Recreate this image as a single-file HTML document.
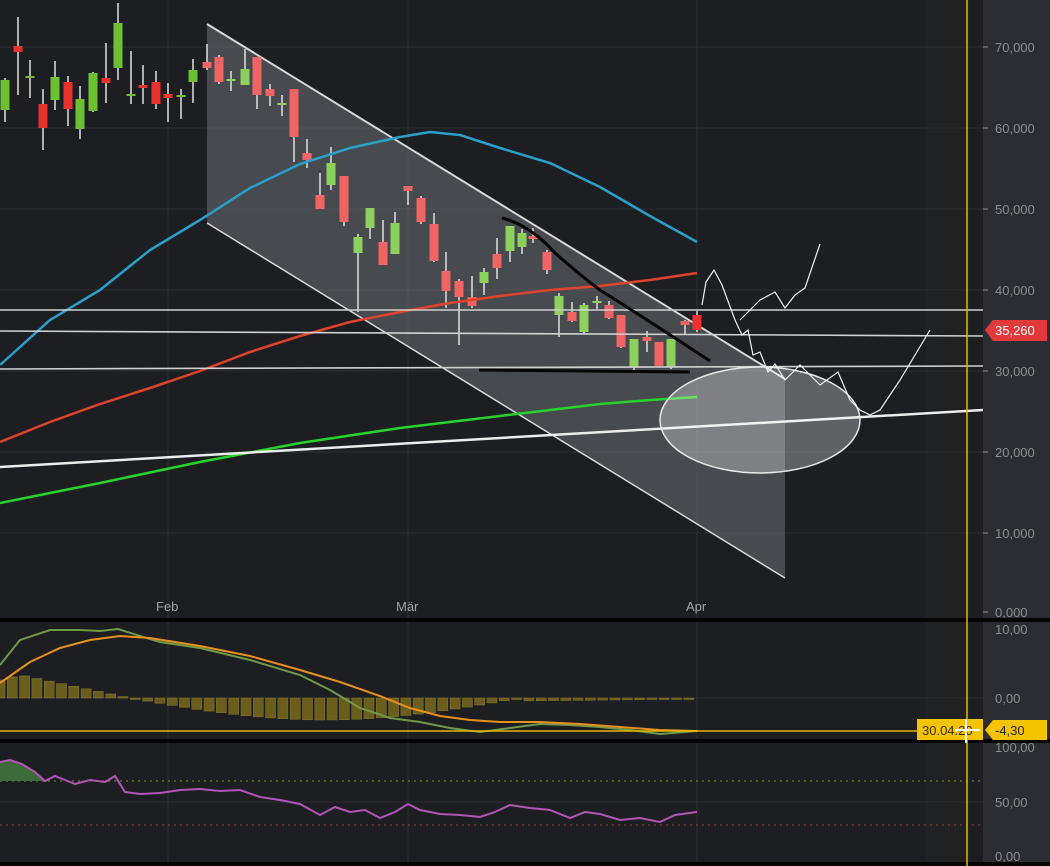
<!DOCTYPE html>
<html><head><meta charset="utf-8"><style>
html,body{margin:0;padding:0;background:#1c1e22;width:1050px;height:866px;overflow:hidden}
svg{display:block;font-family:"Liberation Sans",sans-serif}
</style></head><body>
<svg id="s" width="1050" height="866" viewBox="0 0 1050 866" xmlns="http://www.w3.org/2000/svg">
<rect width="1050" height="866" fill="#1c1e22"/>
<rect x="983" y="0" width="67" height="866" fill="#2b2d32"/>
<g stroke="#2c2e33" stroke-width="1">
<line x1="0" y1="47" x2="983" y2="47"/><line x1="0" y1="128" x2="983" y2="128"/><line x1="0" y1="209" x2="983" y2="209"/><line x1="0" y1="290" x2="983" y2="290"/><line x1="0" y1="371" x2="983" y2="371"/><line x1="0" y1="452" x2="983" y2="452"/><line x1="0" y1="533" x2="983" y2="533"/>
<line x1="168" y1="0" x2="168" y2="866"/><line x1="408" y1="0" x2="408" y2="866"/><line x1="697" y1="0" x2="697" y2="866"/>
<line x1="0" y1="698" x2="983" y2="698"/><line x1="0" y1="802" x2="983" y2="802"/>
</g>
<rect x="925" y="0" width="44" height="866" fill="#2a2a22" opacity="0.25"/>
<polygon points="207,24 785,379 785,578 207,223" fill="#8a8b90" fill-opacity="0.4"/>
<line x1="207" y1="24" x2="785" y2="379" stroke="#d8d8d8" stroke-width="2"/>
<line x1="207" y1="223" x2="785" y2="578" stroke="#d8d8d8" stroke-width="1.5"/>
<g id="candles"></g>
<polyline fill="none" stroke="#2a9fc9" stroke-width="2.5" points="0,365 50,320 100,290 150,250 200,220 250,188 300,164 350,148 400,137 430,132 460,135 500,148 550,163 600,187 650,216 697,242"/>
<polyline fill="none" stroke="#e0432b" stroke-width="2.5" points="0,442 50,422 100,404 150,388 200,371 250,352 300,336 350,322 400,312 450,303 500,296 550,290 600,286 650,280 697,273"/>
<polyline fill="none" stroke="#25d42a" stroke-width="2.5" points="0,503 100,483 200,462 300,443 400,428 500,416 550,410 600,404 650,400 697,397"/>
<g stroke="#d0d0d0" stroke-width="1.6">
<line x1="0" y1="310" x2="983" y2="310"/>
<line x1="0" y1="331" x2="983" y2="336"/>
<line x1="0" y1="369" x2="983" y2="366"/>
</g>
<line x1="0" y1="467" x2="983" y2="410" stroke="#ececec" stroke-width="2.5"/>
<ellipse cx="760" cy="420" rx="100" ry="53" fill="#ffffff" fill-opacity="0.3" stroke="#e8e8e8" stroke-width="1.5"/>
<path d="M502,218 Q530,225 555,253 Q580,275 600,290 Q640,315 710,361" fill="none" stroke="#050505" stroke-width="3"/>
<line x1="479" y1="370" x2="690" y2="372" stroke="#050505" stroke-width="3"/>
<polyline fill="none" stroke="#f0f0f0" stroke-width="1.2" points="702,305 706,282 714,270 722,285 735,320 742,335 748,330 753,355 760,352 768,372 775,364 785,380 800,365 820,385 838,372 850,400 860,410 870,415 880,410 900,380 930,330"/>
<polyline fill="none" stroke="#f0f0f0" stroke-width="1.2" points="740,320 760,300 775,292 785,308 795,295 805,288 820,244"/>
<g fill="#8a8c90" font-size="13">
<text x="995" y="52">70,000</text><text x="995" y="133">60,000</text><text x="995" y="214">50,000</text><text x="995" y="295">40,000</text><text x="995" y="376">30,000</text><text x="995" y="457">20,000</text><text x="995" y="538">10,000</text><text x="995" y="617">0,000</text>
<text x="995" y="634">10,00</text><text x="995" y="703">0,00</text><text x="995" y="752">100,00</text><text x="995" y="807">50,00</text><text x="995" y="861">0,00</text>
</g>
<g stroke="#8a8c90"><line x1="983" y1="47" x2="988" y2="47"/><line x1="983" y1="128" x2="988" y2="128"/><line x1="983" y1="209" x2="988" y2="209"/><line x1="983" y1="290" x2="988" y2="290"/><line x1="983" y1="371" x2="988" y2="371"/><line x1="983" y1="452" x2="988" y2="452"/><line x1="983" y1="533" x2="988" y2="533"/><line x1="983" y1="612" x2="988" y2="612"/></g>
<g fill="#a0a2a6" font-size="13"><text x="156" y="611">Feb</text><text x="396" y="611">Mär</text><text x="686" y="611">Apr</text></g>
<polygon points="985,330 993,320 1047,320 1047,341 993,341" fill="#e3393a"/>
<text x="995" y="335" fill="#fff" font-size="13">35,260</text>
<rect x="0" y="618" width="1050" height="4" fill="#050505"/>
<rect x="0" y="739" width="1050" height="4" fill="#050505"/>
<rect x="0" y="862" width="1050" height="4" fill="#050505"/>
<g id="hist"></g>
<polyline fill="none" stroke="#6f9a4a" stroke-width="2" points="0,665 20,640 50,630 80,630 100,631 118,629 140,636 160,642 200,648 250,660 300,675 330,690 360,708 390,718 420,722 450,728 480,732 510,728 540,724 570,725 600,727 630,730 660,734 697,731"/>
<polyline fill="none" stroke="#e8901a" stroke-width="2" points="0,683 30,662 60,648 90,640 120,636 150,638 200,646 250,656 300,670 340,682 380,696 410,708 440,716 470,720 500,722 540,722 580,724 620,727 660,730 697,731"/>
<line x1="0" y1="731" x2="983" y2="731" stroke="#e6b800" stroke-width="1.5"/>
<line x1="0" y1="781" x2="983" y2="781" stroke="#6c9a2a" stroke-dasharray="2,4"/>
<line x1="0" y1="825" x2="983" y2="825" stroke="#a83a3a" stroke-dasharray="2,4"/>
<path d="M0,781 L0,762 L10,760 L22,764 L35,772 L45,781 Z" fill="#3d6b3a"/>
<polyline fill="none" stroke="#b454b8" stroke-width="2" points="0,762 10,760 22,764 35,772 45,781 55,776 65,780 75,784 90,780 105,782 115,776 125,792 140,794 160,793 180,790 200,789 220,791 240,790 260,797 280,800 300,804 320,815 335,807 350,812 365,810 380,818 395,812 408,804 420,810 440,814 460,815 480,817 495,812 510,805 530,808 550,810 570,818 585,812 600,814 620,820 640,818 660,822 675,815 697,812"/>
<line x1="967" y1="0" x2="967" y2="866" stroke="#e6b800" stroke-width="1.5"/>
<rect x="917" y="719" width="66" height="21" fill="#f5c400"/>
<text x="922" y="735" fill="#3a3000" font-size="13">30.04.20</text>
<polygon points="985,730 993,720 1047,720 1047,740 993,740" fill="#f5c400"/>
<text x="995" y="735" fill="#222" font-size="13">-4,30</text>
<g stroke="#fff" stroke-width="2"><line x1="955" y1="730" x2="980" y2="730"/><line x1="966" y1="719" x2="966" y2="743"/></g>
</svg>
<script>
var C=[[5,'g',80,110,78,122],[18,'r',46,52,17,95],[30,'g',76,78,60,98],[43,'r',104,128,89,150],[55,'g',77,100,61,110],[68,'r',82,109,76,126],[80,'g',99,129,86,139],[93,'g',73,111,72,112],[106,'r',78,83,43,103],[118,'g',23,68,3,80],[131,'g',94,96,51,104],[143,'r',85,88,65,104],[156,'r',82,104,71,109],[168,'r',94,98,83,122],[181,'g',95,97,89,119],[193,'g',70,82,59,103],[207,'r',62,68,44,70],[219,'r',57,82,55,84],[231,'g',79,81,71,91],[245,'g',69,85,49,85],[257,'r',57,95,57,109],[270,'r',89,96,84,106],[282,'g',103,105,95,116],[294,'r',89,137,89,162],[307,'r',153,160,139,168],[320,'r',195,209,173,209],[331,'g',163,185,147,190],[344,'r',176,222,176,226],[358,'g',237,253,234,312],[370,'g',208,228,208,239],[383,'r',242,265,220,265],[395,'g',223,254,212,254],[408,'r',186,191,186,205],[421,'r',198,222,196,224],[434,'r',224,261,213,262],[446,'r',271,291,252,308],[459,'r',281,297,279,345],[472,'r',297,306,276,308],[484,'g',272,283,268,295],[497,'r',254,268,238,279],[510,'g',226,251,226,262],[522,'g',233,247,229,254],[533,'r',236,239,228,243],[547,'r',252,270,250,274],[559,'g',296,315,293,337],[572,'r',312,321,302,322],[584,'g',305,332,303,334],[597,'g',301,303,296,309],[609,'r',305,318,301,319],[621,'r',315,347,315,348],[634,'g',339,367,339,370],[647,'r',337,341,331,352],[659,'r',342,366,342,366],[671,'g',339,367,339,369],[685,'r',321,325,320,334],[697,'R',315,330,311,332]];
var h='';C.forEach(function(c){var x=c[0],inCh=x>=207,col=c[1]=='g'?(inCh?'#8ed05e':'#6cc132'):(c[1]=='R'?'#ee3030':(inCh?'#f06464':'#e8322e'));
h+='<line x1="'+x+'" y1="'+c[4]+'" x2="'+x+'" y2="'+c[5]+'" stroke="#e0e0e0" stroke-width="1.5"/>';
h+='<rect x="'+(x-4.5)+'" y="'+c[2]+'" width="9" height="'+Math.max(2,c[3]-c[2])+'" fill="'+col+'"/>';});
document.getElementById('candles').innerHTML=h;
var hh='';for(var i=0;i<57;i++){var x=i*12.3,t;
if(x<20)t=18+x*0.25;else if(x<130)t=23*Math.max(0,1-(x-20)/110);else if(x<520)t=-Math.sin((x-130)/390*Math.PI)*22;else t=-3+(x-520)/180*2;
var y=698,hgt=Math.abs(t);var yy=t>0?y-hgt:y;
hh+='<rect x="'+(x-5)+'" y="'+yy+'" width="10" height="'+Math.max(1.5,hgt)+'" fill="#6b5d1c" stroke="#8a7a2a" stroke-width="0.5"/>';}
document.getElementById('hist').innerHTML=hh;
</script>
</body></html>
